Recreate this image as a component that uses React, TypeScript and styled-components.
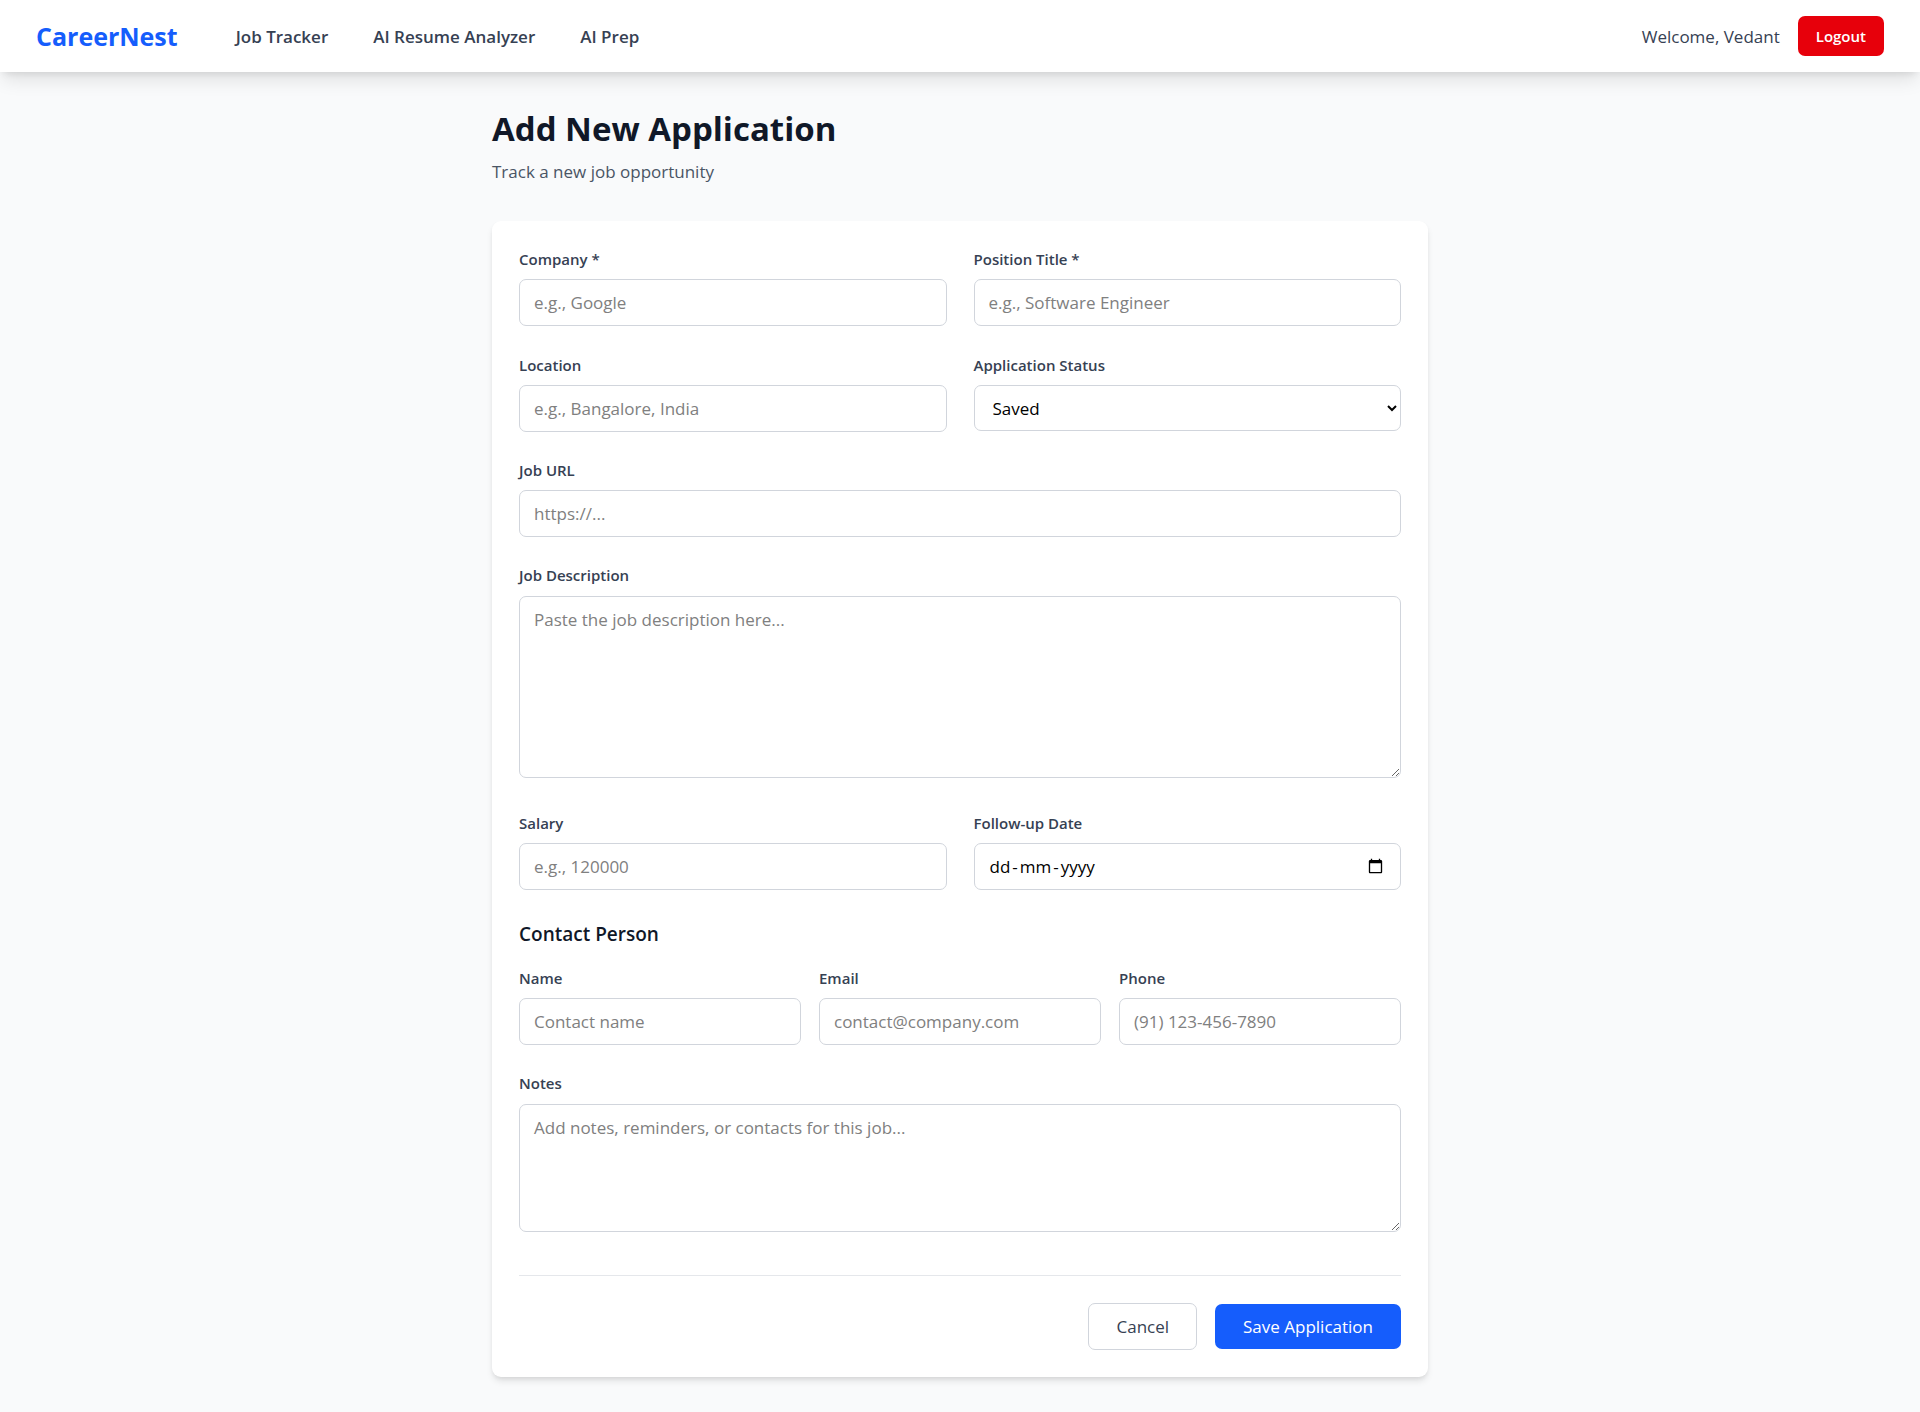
import React, { useState } from "react";
import styled, { createGlobalStyle, css } from "styled-components";

const GlobalStyle = createGlobalStyle`
  *, *::before, *::after { box-sizing: border-box; }
  body {
    margin: 0;
    background: #f9fafb;
    font-family: "Segoe UI", "Open Sans", "Noto Sans", sans-serif;
    font-size: 17px;
    line-height: 27px;
    color: #101828;
  }
  h1, h2, p { margin: 0; }
  button, input, select, textarea { font: inherit; }
`;

const Page = styled.div`
  min-height: 100vh;
  background: #f9fafb;
`;

const NavBar = styled.nav`
  display: flex;
  align-items: center;
  justify-content: space-between;
  padding: 16px 36px;
  background: #fff;
  box-shadow: 0 11px 17px -3px rgba(0, 0, 0, 0.1), 0 5px 7px -4px rgba(0, 0, 0, 0.1);
`;

const NavGroup = styled.div<{ $gap: number }>`
  display: flex;
  align-items: center;
  gap: ${(p) => p.$gap}px;
`;

const Brand = styled.a`
  font-size: 25px;
  line-height: 36px;
  font-weight: 700;
  color: #155dfc;
  text-decoration: none;
`;

const NavLink = styled.a`
  font-weight: 600;
  color: #364153;
  text-decoration: none;
`;

const Welcome = styled.span`
  color: #364153;
`;

const LogoutButton = styled.button`
  padding: 9px 18px;
  border: 0;
  border-radius: 7px;
  background: #e7000b;
  color: #fff;
  font-size: 15px;
  line-height: 22px;
  font-weight: 600;
  cursor: pointer;
`;

const Main = styled.main`
  width: 100%;
  max-width: 1008px;
  margin: 0 auto;
  padding: 36px 36px 35px;
`;

const PageHeader = styled.header`
  display: grid;
  gap: 8px;
  margin-bottom: 36px;
`;

const Title = styled.h1`
  font-size: 33px;
  line-height: 42px;
  font-weight: 700;
`;

const Subtitle = styled.p`
  color: #4a5565;
`;

const Card = styled.form`
  display: grid;
  gap: 27px;
  padding: 27px;
  border-radius: 9px;
  background: #fff;
  box-shadow: 0 5px 7px -1px rgba(0, 0, 0, 0.1), 0 2px 5px -2px rgba(0, 0, 0, 0.1);
`;

const Columns = styled.div<{ $count: number; $gap: number }>`
  display: grid;
  grid-template-columns: repeat(${(p) => p.$count}, minmax(0, 1fr));
  align-items: start;
  gap: 28px ${(p) => p.$gap}px;
`;

const FieldBox = styled.div`
  display: grid;
  gap: 9px;
`;

const Label = styled.label`
  font-size: 15px;
  line-height: 22px;
  font-weight: 600;
  color: #364153;
`;

const control = css`
  display: block;
  width: 100%;
  margin: 0;
  border: 1px solid #d1d5dc;
  border-radius: 7px;
  background: #fff;
  color: #000;
  outline: none;

  &::placeholder {
    color: #808080;
    opacity: 1;
  }

  &:focus {
    border-color: #155dfc;
  }
`;

const Input = styled.input`
  ${control}
  height: 47px;
  padding: 9px 14px;
`;

const Select = styled.select`
  ${control}
  height: 46px;
  padding: 8px 0 8px 14px;
`;

const TextArea = styled.textarea<{ $height: number }>`
  ${control}
  height: ${(p) => p.$height}px;
  margin: 1px 0 7px;
  padding: 9px 14px;
  resize: vertical;
`;

const DateBox = styled.div`
  position: relative;
`;

const DateInput = styled(Input)`
  &::-webkit-datetime-edit {
    opacity: 0;
  }
`;

const DateText = styled.span`
  position: absolute;
  top: 10px;
  left: 16px;
  display: flex;
  gap: 2px;
  color: #000;
  pointer-events: none;
`;

const Section = styled.section`
  display: grid;
  gap: 16px;
`;

const SectionTitle = styled.h2`
  font-size: 19px;
  line-height: 34px;
  font-weight: 600;
`;

const Actions = styled.div`
  display: flex;
  align-items: center;
  justify-content: flex-end;
  gap: 18px;
  margin-top: 9px;
  padding-top: 27px;
  border-top: 1px solid #e5e7eb;
`;

const ActionButton = styled.button<{ $primary?: boolean }>`
  padding: 9px ${(p) => (p.$primary ? 28 : 27)}px;
  border: ${(p) => (p.$primary ? "0" : "1px solid #d1d5dc")};
  border-radius: 7px;
  background: ${(p) => (p.$primary ? "#155dfc" : "#fff")};
  color: ${(p) => (p.$primary ? "#fff" : "#364153")};
  cursor: pointer;
`;

type FieldProps = { id: string; label: string; children: React.ReactNode };

function Field({ id, label, children }: FieldProps) {
  return (
    <FieldBox>
      <Label htmlFor={id}>{label}</Label>
      {children}
    </FieldBox>
  );
}

function TextField({ id, label, placeholder, type = "text" }: { id: string; label: string; placeholder: string; type?: string }) {
  return (
    <Field id={id} label={label}>
      <Input id={id} name={id} type={type} placeholder={placeholder} />
    </Field>
  );
}

function DateField({ id, label }: { id: string; label: string }) {
  const [value, setValue] = useState("");
  const [day, month, year] = value ? value.split("-").reverse() : ["dd", "mm", "yyyy"];
  return (
    <Field id={id} label={label}>
      <DateBox>
        <DateInput id={id} name={id} type="date" value={value} onChange={(e) => setValue(e.target.value)} />
        <DateText aria-hidden="true">
          <span>{day}</span>
          <span>-</span>
          <span>{month}</span>
          <span>-</span>
          <span>{year}</span>
        </DateText>
      </DateBox>
    </Field>
  );
}

const statuses = ["Saved", "Applied", "Interview", "Offer", "Rejected"];

export default function App() {
  return (
    <Page>
      <GlobalStyle />
      <NavBar>
        <NavGroup $gap={58}>
          <Brand href="#">CareerNest</Brand>
          <NavGroup $gap={45}>
            <NavLink href="#tracker">Job Tracker</NavLink>
            <NavLink href="#resume">AI Resume Analyzer</NavLink>
            <NavLink href="#prep">AI Prep</NavLink>
          </NavGroup>
        </NavGroup>
        <NavGroup $gap={18}>
          <Welcome>Welcome, Vedant</Welcome>
          <LogoutButton type="button">Logout</LogoutButton>
        </NavGroup>
      </NavBar>
      <Main>
        <PageHeader>
          <Title>Add New Application</Title>
          <Subtitle>Track a new job opportunity</Subtitle>
        </PageHeader>
        <Card onSubmit={(e) => e.preventDefault()}>
          <Columns $count={2} $gap={27}>
            <TextField id="company" label="Company *" placeholder="e.g., Google" />
            <TextField id="position" label="Position Title *" placeholder="e.g., Software Engineer" />
            <TextField id="location" label="Location" placeholder="e.g., Bangalore, India" />
            <Field id="status" label="Application Status">
              <Select id="status" name="status" defaultValue="Saved">
                {statuses.map((s) => (
                  <option key={s}>{s}</option>
                ))}
              </Select>
            </Field>
          </Columns>
          <TextField id="url" label="Job URL" placeholder="https://..." type="url" />
          <Field id="description" label="Job Description">
            <TextArea id="description" name="description" $height={182} placeholder="Paste the job description here..." />
          </Field>
          <Columns $count={2} $gap={27}>
            <TextField id="salary" label="Salary" placeholder="e.g., 120000" />
            <DateField id="followUp" label="Follow-up Date" />
          </Columns>
          <Section>
            <SectionTitle>Contact Person</SectionTitle>
            <Columns $count={3} $gap={18}>
              <TextField id="contactName" label="Name" placeholder="Contact name" />
              <TextField id="contactEmail" label="Email" placeholder="contact@company.com" type="email" />
              <TextField id="contactPhone" label="Phone" placeholder="(91) 123-456-7890" type="tel" />
            </Columns>
          </Section>
          <Field id="notes" label="Notes">
            <TextArea id="notes" name="notes" $height={128} placeholder="Add notes, reminders, or contacts for this job..." />
          </Field>
          <Actions>
            <ActionButton type="button">Cancel</ActionButton>
            <ActionButton type="submit" $primary>
              Save Application
            </ActionButton>
          </Actions>
        </Card>
      </Main>
    </Page>
  );
}
